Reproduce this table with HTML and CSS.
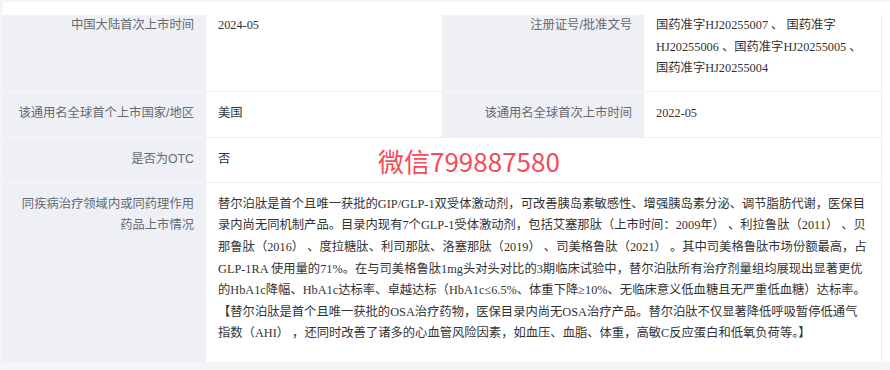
FILE: index.html
```html
<!DOCTYPE html>
<html lang="zh-CN">
<head>
<meta charset="utf-8">
<title>药品信息</title>
<link rel="stylesheet" href="styles.css">
</head>
<body>
<div class="page">
  <div class="sheet">
    <div class="table">
      <div class="row row-four row-first">
        <div class="label">中国大陆首次上市时间</div>
        <div class="value">2024-05</div>
        <div class="label">注册证号/批准文号</div>
        <div class="value">国药准字HJ20255007 、 国药准字HJ20255006 、国药准字HJ20255005 、国药准字HJ20255004</div>
      </div>
      <div class="row row-four row-mid">
        <div class="label">该通用名全球首个上市国家/地区</div>
        <div class="value">美国</div>
        <div class="label">该通用名全球首次上市时间</div>
        <div class="value">2022-05</div>
      </div>
      <div class="row row-two row-mid row-otc">
        <div class="label">是否为OTC</div>
        <div class="value value-wide">否<span class="watermark">微信799887580</span></div>
      </div>
      <div class="row row-two row-long">
        <div class="label">同疾病治疗领域内或同药理作用药品上市情况</div>
        <div class="value">替尔泊肽是首个且唯一获批的GIP/GLP-1双受体激动剂，可改善胰岛素敏感性、增强胰岛素分泌、调节脂肪代谢，医保目录内尚无同机制产品。目录内现有7个GLP-1受体激动剂，包括艾塞那肽（上市时间：2009年） 、利拉鲁肽（2011） 、贝那鲁肽（2016） 、度拉糖肽、利司那肽、洛塞那肽（2019） 、司美格鲁肽（2021） 。其中司美格鲁肽市场份额最高，占GLP-1RA 使用量的71%。在与司美格鲁肽1mg头对头对比的3期临床试验中，替尔泊肽所有治疗剂量组均展现出显著更优的HbA1c降幅、HbA1c达标率、卓越达标（HbA1c≤6.5%、体重下降≥10%、无临床意义低血糖且无严重低血糖）达标率。【替尔泊肽是首个且唯一获批的OSA治疗药物，医保目录内尚无OSA治疗产品。替尔泊肽不仅显著降低呼吸暂停低通气指数（AHI） ，还同时改善了诸多的心血管风险因素，如血压、血脂、体重，高敏C反应蛋白和低氧负荷等。】</div>
      </div>
    </div>
  </div>
</div>
</body>
</html>
```

FILE: styles.css
```css
html, body {
  margin: 0;
  padding: 0;
  background: #f5f5f6;
}

.page {
  width: 890px;
  height: 370px;
  overflow: hidden;
  padding-top: 2px;
  box-sizing: border-box;
}

.sheet {
  margin-left: 3px;
  padding-top: 13px;
  background: #ffffff;
}

.table {
  width: 878px;
  border-right: 1px solid #eceef4;
}

.row {
  display: grid;
}

.row-four {
  grid-template-columns: 203px 236px 202px 237px;
}

.row-two {
  grid-template-columns: 203px 675px;
}

.label,
.value {
  padding: 0 12px;
  font-size: 12.3px;
  line-height: 21.6px;
}

.label {
  background: #eff0f5;
  color: #666a70;
  text-align: right;
  font-family: "Liberation Sans", "Noto Sans CJK SC", sans-serif;
}

.value {
  background: #ffffff;
  color: #333333;
  font-family: "Liberation Serif", "Noto Sans CJK SC", serif;
}

.row-first .label,
.row-first .value {
  padding-top: 0;
  padding-bottom: 11px;
}

.row-mid .label,
.row-mid .value,
.row-long .label,
.row-long .value {
  border-top: 1px solid #eceef4;
}

.row-mid .label,
.row-long .label {
  border-top-color: #f6f7fa;
}

.row-mid .label,
.row-mid .value {
  padding-top: 11.7px;
  padding-bottom: 11.7px;
}

.row-otc .label,
.row-otc .value {
  padding-top: 11.2px;
  padding-bottom: 11.2px;
}

.row-long .label,
.row-long .value {
  padding-top: 11px;
  padding-bottom: 16.8px;
}

.value-wide {
  position: relative;
}

.watermark {
  position: absolute;
  left: 172px;
  top: 5px;
  font-family: "Noto Sans CJK SC", sans-serif;
  font-size: 26px;
  line-height: 36px;
  color: #f44a5a;
  white-space: nowrap;
}
```
